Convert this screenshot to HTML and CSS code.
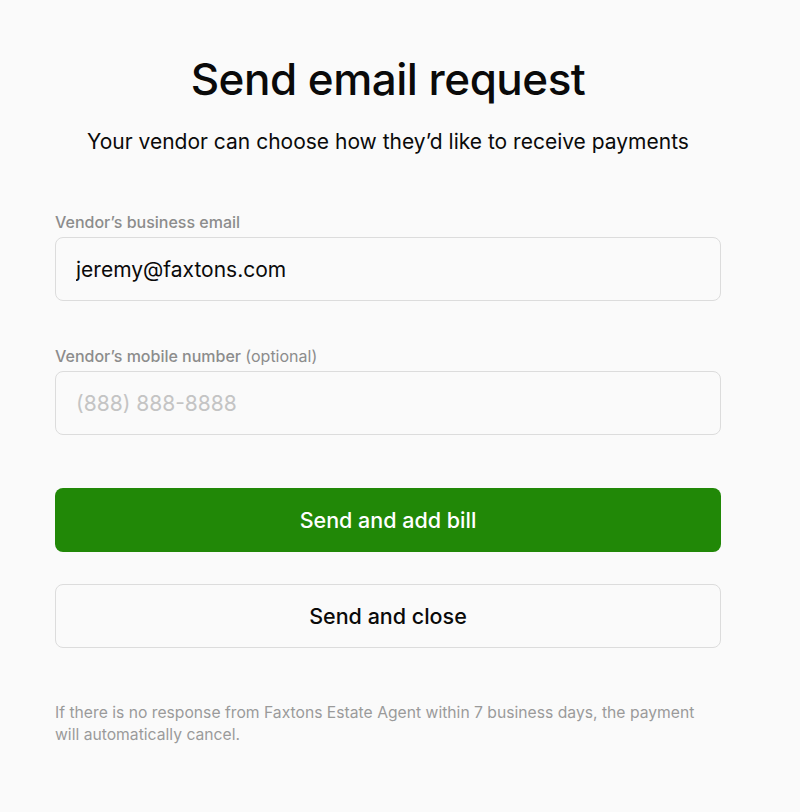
FILE: index.html
```html
<!DOCTYPE html>
<html lang="en">
  <head>
    <meta charset="UTF-8" />
    <title>Send email request</title>
    <link rel="stylesheet" href="styles.css">
  </head>
  <body>
    <div class="requestBlock">
      <h1 class="title">Send email request</h1>
      <p class="subtitle">Your vendor can choose how they’d like to receive payments</p>

      <form class="requestForm">
        <label class="fieldLabel" for="vendorEmail">Vendor’s business email</label>
        <input class="field" type="email" id="vendorEmail" value="jeremy@faxtons.com" />

        <label class="fieldLabel second" for="vendorPhone">Vendor’s mobile number <span class="optional">(optional)</span></label>
        <input class="field" type="tel" id="vendorPhone" placeholder="(888) 888-8888" />

        <button type="submit" class="btnPrimary">Send and add bill</button>
        <button type="button" class="btnSecondary">Send and close</button>
      </form>

      <p class="note">If there is no response from Faxtons Estate Agent within 7 business days, the payment will automatically cancel.</p>
    </div>
  </body>
</html>
```

FILE: styles.css
```css
body {
  margin: 0;
  background-color: #fafafa;
  font-family: "Inter", "Roboto", sans-serif;
  color: #0a0a0a;
}

.requestBlock {
  width: 666px;
  margin-left: 55px;
  padding-top: 53px;
}

.title {
  margin: 0;
  text-align: center;
  font-size: 44px;
  font-weight: 500;
  line-height: 52px;
  letter-spacing: -0.5px;
}

.subtitle {
  margin: 23px 0 0;
  text-align: center;
  font-size: 21px;
  line-height: 28px;
}

.requestForm {
  display: flex;
  flex-direction: column;
  margin-top: 55px;
}

.fieldLabel {
  font-size: 16px;
  line-height: 22px;
  font-weight: 500;
  color: #8c8c8c;
  margin-bottom: 4px;
}
.fieldLabel.second {
  margin-top: 44px;
}
.optional {
  font-weight: 400;
}

.field {
  height: 64px;
  box-sizing: border-box;
  padding: 0 20px;
  border: 1px solid #dcdcdc;
  border-radius: 8px;
  background-color: #fafafa;
  font-family: inherit;
  font-size: 21px;
  color: #0a0a0a;
  outline: none;
}
.field::placeholder {
  color: #c4c4c4;
}

.btnPrimary,
.btnSecondary {
  height: 64px;
  border-radius: 8px;
  font-family: inherit;
  font-size: 21.5px;
  font-weight: 500;
  cursor: pointer;
}
.btnPrimary {
  margin-top: 53px;
  border: none;
  background-color: #218807;
  color: #fff;
}
.btnSecondary {
  margin-top: 32px;
  border: 1px solid #dcdcdc;
  background-color: #fafafa;
  color: #0a0a0a;
}

.note {
  margin: 54px 0 0;
  font-size: 15.7px;
  line-height: 22px;
  color: #9a9a9a;
}
```
